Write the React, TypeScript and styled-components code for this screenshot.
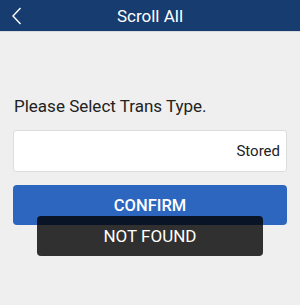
import styled, { createGlobalStyle } from "styled-components";

const Global = createGlobalStyle`
  html, body {
    margin: 0;
    padding: 0;
    background: #efefef;
    font-family: Roboto, "Liberation Sans", sans-serif;
  }
`;

const Page = styled.div`
  width: 300px;
  height: 305px;
  background: #efefef;
  position: relative;
  overflow: hidden;
`;

const Header = styled.header`
  height: 31px;
  background: #173c70;
  border-bottom: 1px solid #d6d9de;
  display: flex;
  align-items: center;
  justify-content: center;
  position: relative;
  color: #fff;
  font-size: 17px;
`;

const Back = styled.button`
  position: absolute;
  left: 8px;
  top: 6px;
  width: 16px;
  height: 20px;
  padding: 0;
  border: 0;
  background: none;
  display: flex;
  align-items: center;
  justify-content: center;
`;

const Body = styled.main`
  padding: 64px 13px 0 13px;
  display: flex;
  flex-direction: column;
`;

const Label = styled.div`
  font-size: 17px;
  color: #222;
  line-height: 20px;
  margin-left: 1px;
`;

const Field = styled.div`
  margin-top: 14px;
  height: 40px;
  background: #fff;
  border: 1px solid #dcdcdc;
  border-radius: 3px;
  display: flex;
  align-items: center;
  justify-content: flex-end;
  padding-right: 6px;
  font-size: 15px;
  color: #222;
`;

const Confirm = styled.button`
  margin-top: 13px;
  height: 40px;
  width: 100%;
  border: 0;
  border-radius: 4px;
  background: #2d66bf;
  color: #fff;
  font-family: Roboto, "Liberation Sans", sans-serif;
  font-size: 16.5px;
  font-weight: 500;
  padding: 0;
`;

const Toast = styled.div`
  position: absolute;
  left: 37px;
  top: 216px;
  width: 226px;
  height: 40px;
  border-radius: 4px;
  background: rgba(0, 0, 0, 0.8);
  color: #fff;
  font-size: 17px;
  display: flex;
  align-items: center;
  justify-content: center;
  box-sizing: border-box;
`;

export default function App() {
  return (
    <Page>
      <Global />
      <Header>
        <Back aria-label="back">
          <svg width="12" height="18" viewBox="0 0 12 18">
            <path d="M10.5 1L3 9l7.5 8" fill="none" stroke="#fff" strokeWidth="1.4" />
          </svg>
        </Back>
        Scroll All
      </Header>
      <Body>
        <Label>Please Select Trans Type.</Label>
        <Field>Stored</Field>
        <Confirm>CONFIRM</Confirm>
      </Body>
      <Toast>NOT FOUND</Toast>
    </Page>
  );
}
